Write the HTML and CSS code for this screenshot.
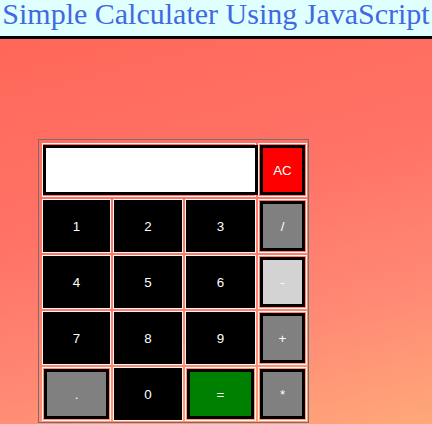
FILE: index.html
```html
<!DOCTYPE html>
<html>
<head>
<meta charset="utf-8">
<title>Simple Calculater</title>
<link rel="stylesheet" href="styles.css">
</head>
<body>
<header class="top">
  <h1 class="title">Simple Calculater Using JavaScript</h1>
</header>
<main class="stage">
  <div class="calc">
    <div class="cell wide pad"><div class="display"></div></div>
    <div class="cell pad"><button class="key op ac">AC</button></div>

    <div class="cell"><button class="key num">1</button></div>
    <div class="cell"><button class="key num">2</button></div>
    <div class="cell"><button class="key num">3</button></div>
    <div class="cell pad"><button class="key op">/</button></div>

    <div class="cell"><button class="key num">4</button></div>
    <div class="cell"><button class="key num">5</button></div>
    <div class="cell"><button class="key num">6</button></div>
    <div class="cell pad"><button class="key op light">-</button></div>

    <div class="cell"><button class="key num">7</button></div>
    <div class="cell"><button class="key num">8</button></div>
    <div class="cell"><button class="key num">9</button></div>
    <div class="cell pad"><button class="key op">+</button></div>

    <div class="cell pad"><button class="key op">.</button></div>
    <div class="cell"><button class="key num">0</button></div>
    <div class="cell pad"><button class="key op eq">=</button></div>
    <div class="cell pad"><button class="key op">*</button></div>
  </div>
</main>
</body>
</html>
```

FILE: styles.css
```css
html, body {
  margin: 0;
  padding: 0;
  height: 100%;
}

body {
  background: linear-gradient(165deg, #ff6656 0%, #ff7266 45%, #ff8a74 75%, #ffa87a 100%);
  overflow: hidden;
}

.top {
  background: #e0ffff;
  height: 36px;
  border-bottom: 3px solid #000;
}

.title {
  margin: 0;
  font-family: "Liberation Serif", "Times New Roman", serif;
  font-weight: normal;
  font-size: 30px;
  line-height: 27px;
  color: #4169e1;
  text-align: center;
  white-space: nowrap;
}

.stage {
  padding: 100px 0 0 38px;
}

.calc {
  display: grid;
  grid-template-columns: 69px 70px 71px 49px;
  grid-auto-rows: 54px;
  gap: 2px;
  width: max-content;
  border: 1px solid #707070;
  padding: 3px 1px 1px 3px;
}

.cell {
  border: 1px solid #fff5f0;
  box-sizing: border-box;
  display: flex;
  min-width: 0;
}

.cell.pad {
  padding: 1px;
}

.cell.wide {
  grid-column: span 3;
  padding-right: 0;
  padding-left: 0;
}

.display {
  background: #fff;
  border: 3px solid #000;
  box-sizing: border-box;
  flex: none;
  width: calc(100% + 3px);
  height: 100%;
  position: relative;
  z-index: 1;
}

.key {
  flex: 1;
  margin: 0;
  padding: 0;
  font-family: "Liberation Sans", Arial, sans-serif;
  font-size: 13.33px;
  color: #fff;
  cursor: pointer;
}

.num {
  background: #000;
  border: none;
}

.op {
  background: #808080;
  border: 3px solid #000;
}

.op.light {
  background: #d3d3d3;
}

.op.ac {
  background: #ff0000;
}

.op.eq {
  background: #008000;
}
```
